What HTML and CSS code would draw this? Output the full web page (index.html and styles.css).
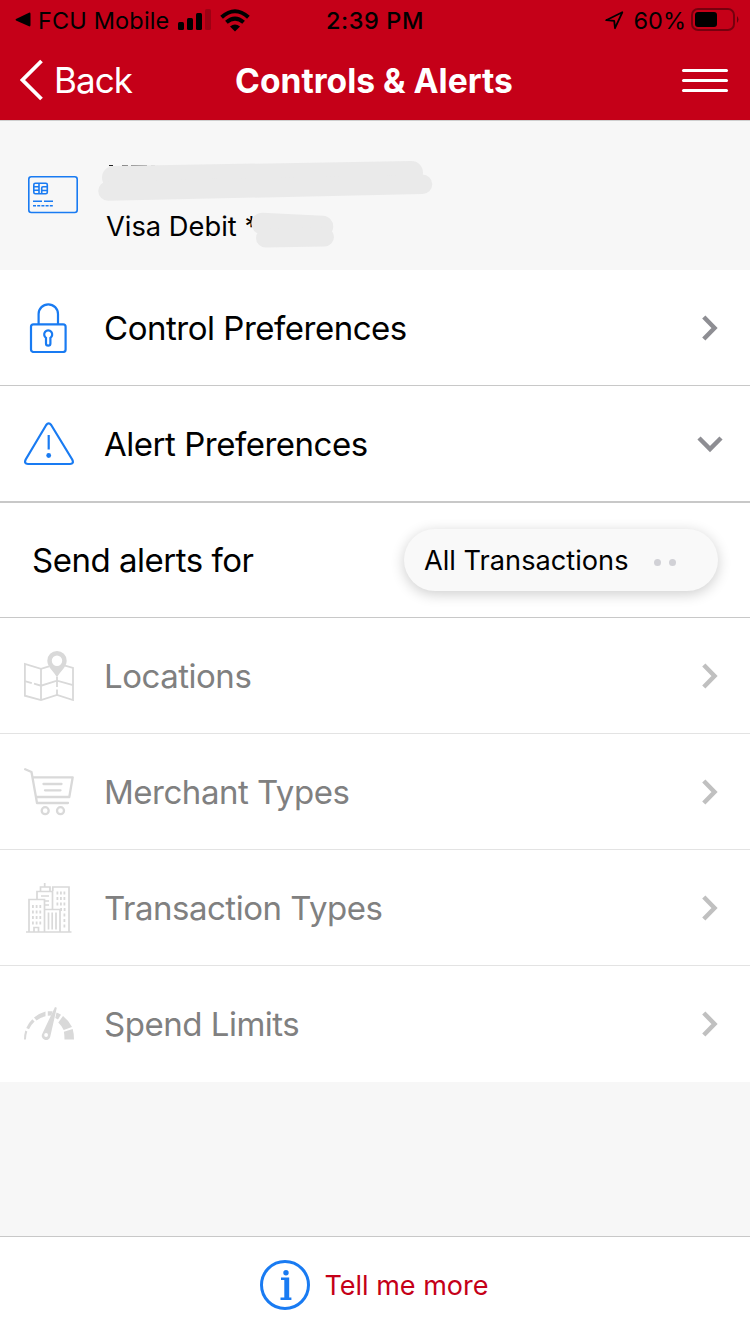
FILE: index.html
```html
<!DOCTYPE html>
<html lang="en">
<head>
  <meta charset="UTF-8" />
  <meta name="viewport" content="width=device-width, initial-scale=1.0" />
  <title>Controls &amp; Alerts</title>
  <link rel="stylesheet" href="styles.css">
</head>
<body>
  <header>
    <div class="status-bar">
      <div class="status-left">
        <svg width="16" height="16" viewBox="0 0 16 16"><path d="M1 7 L14 0.7 Q15.5 .3 15.5 2 V13 Q15.5 14.7 14 14.3 L1 8.5 Q0 7.8 1 7Z"/></svg>
        <span class="carrier">FCU Mobile</span>
        <svg class="signal" width="34" height="22" viewBox="0 0 34 22"><rect x="0" y="13" width="6" height="8" rx="1.5"/><rect x="9" y="9" width="6" height="12" rx="1.5"/><rect x="18" y="4" width="6" height="17" rx="1.5"/><rect x="27" y="0" width="6" height="21" rx="1.5" opacity=".2"/></svg>
        <svg class="wifi" width="30" height="23" viewBox="0 0 30 23"><g fill="none" stroke="#000" stroke-width="4"><path d="M1.6 8.3 Q15 -3.8 28.4 8.3"/><path d="M6.4 13.3 Q15 5.8 23.6 13.3"/></g><path d="M10 17.4 Q15 13.4 20 17.4 L15 22.5Z"/></svg>
      </div>
      <div class="time">2:39 PM</div>
      <div class="status-right">
        <svg width="19" height="19" viewBox="0 0 19 19"><path d="M1.2 9.2 L17.3 1.3 L10 17.2 L9.2 9.8Z" fill="none" stroke="#000" stroke-width="1.8" stroke-linejoin="round"/></svg>
        <span class="percent">60%</span>
        <svg width="48" height="24" viewBox="0 0 48 24"><rect x="1" y="1" width="42" height="21" rx="6" fill="none" stroke="#000" stroke-opacity=".4" stroke-width="2"/><rect x="4" y="4" width="22" height="15" rx="3"/><path d="M46 8 Q49 11.5 46 15Z" opacity=".5"/></svg>
      </div>
    </div>
    <nav>
      <a class="back">
        <svg width="24" height="42" viewBox="0 0 24 42"><path d="M21.5 2 L2.5 21 L21.5 40" fill="none" stroke="#fff" stroke-width="3.8"/></svg>
        <span>Back</span>
      </a>
      <h1>Controls &amp; Alerts</h1>
      <a class="menu"><i></i><i></i><i></i></a>
    </nav>
  </header>

  <section class="card">
    <svg class="card-icon" width="50" height="38" viewBox="0 0 50 38" fill="none" stroke="#197bf2" stroke-width="1.6">
      <rect x=".8" y=".8" width="48.4" height="35.7" rx="2.5"/>
      <rect x="5.8" y="7.3" width="13.5" height="10.5" rx="1.5"/>
      <path d="M6 10.8h5M6 14.3h5M11 7.5v10.3M13.7 17.5v-5.5q0-1.2 1.2-1.2h4.4M14 14.5h5"/>
      <path d="M5 25.2h9M16 25.2h9"/>
      <path d="M5 29.7h20" stroke-dasharray="3 1.2"/>
    </svg>
    <div class="card-text">Visa Debit <span class="star">*</span></div>
    <svg class="masked" width="340" height="96" viewBox="96 156 340 96">
      <path d="M109 165.5h4" stroke="#222"/><path d="M122 165.5h6M131 165.5h16" stroke="#777"/><path d="M151 165.5h4" stroke="#ccc"/>
      <g fill="none" stroke="#eaeaea" stroke-linecap="round">
        <path d="M113.5 177.5 L411.5 172.5" stroke-width="23"/>
        <path d="M108 191 L422.5 184.3" stroke-width="19.5"/>
        <path d="M262 223.5 L322.5 226.5" stroke-width="21.5"/>
        <path d="M265.5 238 L324.5 237" stroke-width="19"/>
      </g>
    </svg>
  </section>

  <main>
    <a class="row">
      <svg class="icon" viewBox="0 0 50 50" fill="none" stroke="#197bf2" stroke-width="2.2">
        <rect x="7" y="21.3" width="34.6" height="27.7" rx="2.5"/>
        <path d="M14.6 21V11a9.7 9.7 0 0 1 19.4 0V21"/>
        <path d="M22 34.8a4 4 0 1 1 4.4 0V40.4a2.2 2.2 0 0 1-4.4 0Z"/>
      </svg>
      <span>Control Preferences</span>
      <svg class="chevron" viewBox="0 0 28 28"><path d="M7.8 3 L18.5 14 L7.8 25"/></svg>
    </a>
    <a class="row thick">
      <svg class="icon" viewBox="0 0 50 50" fill="none" stroke="#197bf2" stroke-width="2.2">
        <path d="M22.2 6 Q24.7 2.7 27.2 6 L48.2 40.5 Q50.3 44.8 46 45 H4 Q-.3 44.8 1.7 40.5Z"/>
        <path d="M24.7 16v14.5"/><circle cx="24.7" cy="36.5" r="2.4" fill="#197bf2" stroke="none"/>
      </svg>
      <span>Alert Preferences</span>
      <svg class="chevron" viewBox="0 0 28 28"><path d="M3 8 L14 19 L25 8"/></svg>
    </a>
    <div class="row send">
      <label>Send alerts for</label>
      <button>All Transactions <i></i><i></i></button>
    </div>
    <a class="row disabled">
      <svg class="icon" viewBox="0 0 50 50" fill="none" stroke="#d9d9d9" stroke-width="1.8">
        <path d="M25 15.3 L17 17.8 L.9 13V44.7L17 49 L33 44 L49 49V17 L41 14.7"/>
        <path d="M17 18V49M.8 30.2l7 2M10 32.7l7 2 16-5 16 4.5M33 26v10M33 38.5v5.5"/>
        <path d="M33 26.5 C31 21.5 23.3 16.5 23.3 9.7a9.7 9.7 0 0 1 19.4 0C42.7 16.5 35 21.5 33 26.5Z M38.2 9.7a5.2 5.2 0 1 0-10.4 0a5.2 5.2 0 0 0 10.4 0Z" fill="#d9d9d9" fill-rule="evenodd" stroke="none"/>
      </svg>
      <span>Locations</span>
      <svg class="chevron" viewBox="0 0 28 28"><path d="M7.8 3 L18.5 14 L7.8 25"/></svg>
    </a>
    <a class="row disabled">
      <svg class="icon" viewBox="0 0 50 50" fill="none" stroke="#d9d9d9" stroke-width="2.3" stroke-linecap="round" stroke-linejoin="round">
        <path d="M1.2 2.3 L7.5 5 L13 36H44M8.7 10.3H48.7L45.3 30H12.5M19.5 17H37.5M21 23.3H36.5"/>
        <circle cx="21.2" cy="43.7" r="3.5"/><circle cx="36.5" cy="43.7" r="3.5"/>
      </svg>
      <span>Merchant Types</span>
      <svg class="chevron" viewBox="0 0 28 28"><path d="M7.8 3 L18.5 14 L7.8 25"/></svg>
    </a>
    <a class="row disabled">
      <svg class="icon" viewBox="0 0 50 50" fill="none" stroke="#d9d9d9" stroke-width="1.7">
        <path d="M2 49H47.5M5 49V16.5H20.5V49M13 16V8.5H28.5V26M16.5 8.5V4H26v4.5M20.7 4V0M28.8 8V4H45v45M20.5 26.5H36V49"/>
        <path d="M10 49v-4.5h4.5V49M17 13h8M20.5 18h4.5M20.5 22h4.5"/>
        <path d="M24.5 29.5v17M28.2 29.5v17M32 29.5v17"/>
        <path d="M8 23.5h10M8 29h10M8 34.5h10M8 40h10" stroke-width="2.8" stroke-dasharray="1.8 1.9"/>
        <path d="M32.5 10h9.5M32.5 15.5h9.5M32.5 21h9.5M36.2 26.5h6M39.5 32h2M39.5 37.5h2M39.5 43h2" stroke-width="2.8" stroke-dasharray="1.8 1.7"/>
      </svg>
      <span>Transaction Types</span>
      <svg class="chevron" viewBox="0 0 28 28"><path d="M7.8 3 L18.5 14 L7.8 25"/></svg>
    </a>
    <a class="row disabled">
      <svg class="icon" viewBox="0 0 50 50" fill="#d9d9d9">
        <path d="M0 40.5 Q0 35.5 1.3 31.5L3.3 32.5Q2 36 1.9 40.5ZM2.3 29 Q4.5 23.8 8.3 20.2L10.6 22.6Q7 25.8 5 30.3ZM10 18.5 Q15 14.3 21.5 12.5V17.3Q16.2 18.5 12.5 21.5ZM23.8 12.2H28.6L27.2 16.5 23.8 16.8ZM32.5 13.5 Q35 14.4 37 15.7L34 20.4 31.3 18.9ZM39 17 Q44.8 21.5 48 28L39.7 31Q37.5 26.5 34.3 23.5ZM48.7 30 Q50 34.5 50 40.5H40.5Q40.5 36 39.9 32.8Z"/>
        <path d="M31 8 L32.8 8.7 L26.3 37.5A4.3 4.3 0 1 1 18.3 34.7Z M24 36a1.9 1.9 0 1 0-3.8 0a1.9 1.9 0 0 0 3.8 0Z" fill-rule="evenodd"/>
      </svg>
      <span>Spend Limits</span>
      <svg class="chevron" viewBox="0 0 28 28"><path d="M7.8 3 L18.5 14 L7.8 25"/></svg>
    </a>
  </main>

  <footer>
    <svg width="50" height="50" viewBox="0 0 50 50"><circle cx="25" cy="25" r="23.5" fill="none" stroke="#197bf2" stroke-width="3"/><g fill="#197bf2"><circle cx="26" cy="12.8" r="2.7"/><path d="M21 17.5h8.2v20h2.2V40H20.5v-2.5h3.8V20H21Z"/></g></svg>
    <a>Tell me more</a>
  </footer>
</body>
</html>
```
FILE: styles.css
```css
* {
  box-sizing: border-box;
}
body {
  margin: 0;
  height: 1334px;
  display: flex;
  flex-direction: column;
  background: #f7f7f7;
  font-family: Inter, "Liberation Sans", sans-serif;
  color: #000;
}
svg {
  display: block;
  flex: none;
}
header {
  height: 121px;
  background: #c50018;
  border-bottom: 1px solid #cfcfcf;
}
.status-bar {
  height: 40px;
  display: grid;
  grid-template-columns: 1fr auto 1fr;
  align-items: center;
  padding: 0 11px 0 15px;
  font-size: 23.5px;
}
.status-left, .status-right {
  display: flex;
  align-items: center;
}
.status-right {
  justify-content: flex-end;
}
.carrier {
  margin-left: 7px;
  width: 132px;
  letter-spacing: 0.15px;
  white-space: nowrap;
}
.signal {
  margin-left: 8px;
}
.wifi {
  margin-left: 8px;
}
.time {
  margin-right: 4px;
  font-weight: 500;
  letter-spacing: 0.6px;
}
.percent {
  margin: 0 5px 0 10px;
}
nav {
  height: 80px;
  display: grid;
  grid-template-columns: 1fr auto 1fr;
  align-items: center;
  padding: 0 22px 0 20px;
  color: #fff;
}
.back {
  display: flex;
  align-items: center;
  gap: 10px;
  font-size: 35px;
  letter-spacing: -0.9px;
}
h1 {
  margin: 0;
  font-size: 33.6px;
  font-weight: 700;
}
.menu {
  justify-self: end;
  width: 46px;
  display: grid;
  gap: 7px;
}
.menu i {
  height: 3px;
  background: #fff;
  border-radius: 2px;
}

/* Selected card */
.card {
  position: relative;
  height: 149px;
  display: flex;
  padding: 55px 28px 0;
}
.card-text {
  margin: 34px 0 0 28px;
  font-size: 27.3px;
  line-height: 34px;
}
.masked {
  position: absolute;
  left: 96px;
  top: 35px;
}

/* Preference rows */
.row {
  height: 116px;
  display: flex;
  align-items: center;
  padding: 0 26px 0 24px;
  background: #fff;
  border-bottom: 1px solid #c8c8c8;
  font-size: 33px;
  letter-spacing: -0.48px;
}
.row.thick {
  height: 117px;
  border-bottom-width: 2px;
}
.row span {
  margin-left: 30px;
}
.icon {
  width: 50px;
  height: 50px;
}
.chevron {
  width: 28px;
  height: 28px;
  margin-left: auto;
  fill: none;
  stroke: #8e8e93;
  stroke-width: 4.5;
}
.row.disabled {
  color: #808080;
  border-color: #e3e3e3;
}
.row.disabled:last-child {
  border-bottom: 0;
}
.disabled .chevron {
  stroke: #c0c0c0;
}
.row.send {
  height: 115px;
  justify-content: space-between;
  padding: 0 32px;
}
button {
  width: 314px;
  height: 62px;
  display: flex;
  align-items: center;
  padding: 0 20px;
  border: 0;
  border-radius: 31px;
  background: #f9f9f9;
  box-shadow: 0 3px 14px rgba(0, 0, 0, 0.2);
  font: 27.2px Inter, "Liberation Sans", sans-serif;
  color: #000;
  white-space: nowrap;
}
button i {
  width: 7px;
  height: 7px;
  margin: 4px 0 0 8px;
  border-radius: 50%;
  background: #d1d1d6;
}
button i:first-of-type {
  margin-left: 25px;
}

footer {
  height: 98px;
  margin-top: auto;
  display: flex;
  align-items: center;
  justify-content: center;
  gap: 14px;
  padding: 0 1px 1px 0;
  background: #fff;
  border-top: 1px solid #c8c8c8;
  font-size: 27px;
  color: #c50018;
}
```
